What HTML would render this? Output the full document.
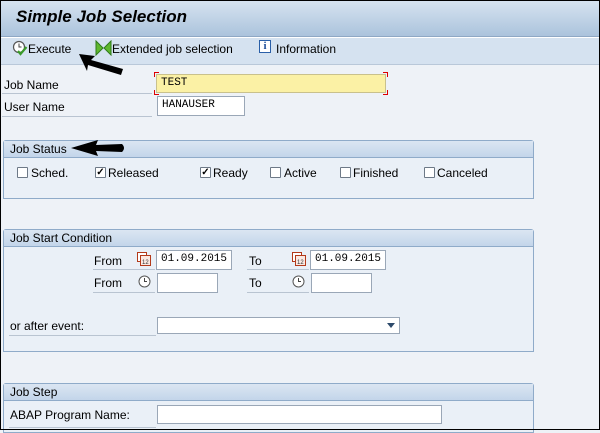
<!DOCTYPE html>
<html><head><meta charset="utf-8"><style>
*{margin:0;padding:0;box-sizing:border-box}
body{width:600px;height:430px;overflow:hidden;background:#eef2f7;font-family:"Liberation Sans",sans-serif;font-size:12px;color:#000;position:relative}
.a{position:absolute}
.frame{left:0;top:0;width:600px;height:430px;border:1px solid #000}
.title{left:1px;top:1px;width:598px;height:36px;background:linear-gradient(#d6e3f0,#abc3dc);border-bottom:1px solid #8fa8c4}
.title span{position:absolute;left:15px;top:6px;font-weight:bold;font-style:italic;font-size:17px;color:#000}
.tb{left:1px;top:37px;width:598px;height:28px;background:#d5e2f0;border-top:1px solid #fff;border-bottom:1px solid #b9c8d9}
.lab{font-size:12px;line-height:14px}
.inp{background:#fff;border:1px solid #9aa7b7;font-family:"Liberation Mono",monospace;font-size:11px;padding-left:4px;line-height:17px}
.sep{height:1px;background:#b9c4d1}
.grp{border:1px solid #8fabc9;border-radius:3px 3px 0 0;background:#eaf0f7}
.gh{position:absolute;left:0;top:0;right:0;height:17px;background:linear-gradient(#dbe6f2,#c3d5ea);border-bottom:1px solid #8fabc9;padding-left:6px;line-height:17px;font-size:12px}
.cb{width:11px;height:11px;border:1px solid #6d7987;background:#fff;border-radius:1px}
.ck{font-size:10px;line-height:9px;text-align:center;font-weight:bold}
</style></head><body>
<div class="a title"><span>Simple Job Selection</span></div>
<div class="a tb"></div>
<svg class="a" style="left:12px;top:40px" width="16" height="16" viewBox="0 0 16 16"><circle cx="7" cy="7" r="5.5" fill="#fff" stroke="#555" stroke-width="1.2"/><path d="M7 3.5V7H9.5" stroke="#444" fill="none"/><path d="M6 11l2.5 3 6-7" stroke="#3a9a2a" stroke-width="2.2" fill="none"/></svg>
<div class="a lab" style="left:28px;top:42px">Execute</div>
<svg class="a" style="left:95px;top:40px" width="17" height="16" viewBox="0 0 17 16"><path d="M1 1L8 8L1 15Z M16 1L9 8L16 15Z" fill="#5fb82e" stroke="#2e7a1a"/></svg>
<div class="a lab" style="left:112px;top:42px">Extended job selection</div>
<div class="a" style="left:259px;top:40px;width:12px;height:13px;border:1px solid #2a5fa8;background:#fff;color:#1f4f9a;font-weight:bold;font-size:11px;line-height:11px;text-align:center;font-family:'Liberation Serif',serif">i</div>
<div class="a lab" style="left:276px;top:42px">Information</div>
<svg class="a" style="left:75px;top:50px" width="55" height="30" viewBox="0 0 55 30"><path d="M4 4L20 6L16 10L48 19L46 25L13 15L12 21Z" fill="#000"/></svg>

<div class="a lab" style="left:4px;top:78px">Job Name</div>
<div class="a sep" style="left:2px;top:93px;width:150px"></div>
<div class="a lab" style="left:4px;top:100px">User Name</div>
<div class="a sep" style="left:2px;top:116px;width:150px"></div>
<div class="a inp" style="left:156px;top:74px;width:230px;height:19px;background:#fbf1a5;border-color:#c9c18c">TEST</div>
<div class="a" style="left:154px;top:72px;width:5px;height:5px;border-left:1px solid #d00;border-top:1px solid #d00"></div>
<div class="a" style="left:154px;top:90px;width:5px;height:5px;border-left:1px solid #d00;border-bottom:1px solid #d00"></div>
<div class="a" style="left:383px;top:72px;width:5px;height:5px;border-right:1px solid #d00;border-top:1px solid #d00"></div>
<div class="a" style="left:383px;top:90px;width:5px;height:5px;border-right:1px solid #d00;border-bottom:1px solid #d00"></div>
<div class="a inp" style="left:157px;top:96px;width:88px;height:20px">HANAUSER</div>

<div class="a grp" style="left:3px;top:140px;width:531px;height:59px"><div class="gh">Job Status</div></div>
<svg class="a" style="left:70px;top:138px" width="56" height="20" viewBox="0 0 56 20"><path d="M1 10L28 2L26 7L52 6Q56 10 52 14L26 13L28 18Z" fill="#000"/></svg>
<div class="a cb" style="left:17px;top:167px"></div><div class="a lab" style="left:31px;top:166px">Sched.</div>
<div class="a cb ck" style="left:95px;top:167px">✓</div><div class="a lab" style="left:108px;top:166px">Released</div>
<div class="a cb ck" style="left:200px;top:167px">✓</div><div class="a lab" style="left:213px;top:166px">Ready</div>
<div class="a cb" style="left:270px;top:167px"></div><div class="a lab" style="left:284px;top:166px">Active</div>
<div class="a cb" style="left:340px;top:167px"></div><div class="a lab" style="left:353px;top:166px">Finished</div>
<div class="a cb" style="left:424px;top:167px"></div><div class="a lab" style="left:437px;top:166px">Canceled</div>

<div class="a grp" style="left:3px;top:229px;width:531px;height:123px"><div class="gh">Job Start Condition</div></div>
<div class="a lab" style="left:94px;top:254px">From</div>
<div class="a sep" style="left:93px;top:269px;width:62px"></div>
<svg class="a" style="left:137px;top:252px" width="14" height="14" viewBox="0 0 14 14"><rect x="0.5" y="0.5" width="9" height="9" fill="#fff" stroke="#b33a1a"/><rect x="3.5" y="3.5" width="10" height="10" fill="#fbe9e2" stroke="#b33a1a"/><text x="5" y="12" font-size="6" font-family="Liberation Sans" fill="#333">12</text></svg>
<div class="a inp" style="left:156px;top:250px;width:76px;height:20px">01.09.2015</div>
<div class="a lab" style="left:249px;top:254px">To</div>
<div class="a sep" style="left:247px;top:269px;width:62px"></div>
<svg class="a" style="left:292px;top:252px" width="14" height="14" viewBox="0 0 14 14"><rect x="0.5" y="0.5" width="9" height="9" fill="#fff" stroke="#b33a1a"/><rect x="3.5" y="3.5" width="10" height="10" fill="#fbe9e2" stroke="#b33a1a"/><text x="5" y="12" font-size="6" font-family="Liberation Sans" fill="#333">12</text></svg>
<div class="a inp" style="left:310px;top:250px;width:76px;height:20px">01.09.2015</div>
<div class="a lab" style="left:94px;top:276px">From</div>
<div class="a sep" style="left:93px;top:292px;width:62px"></div>
<svg class="a" style="left:138px;top:275px" width="13" height="13" viewBox="0 0 13 13"><circle cx="6.5" cy="6.5" r="5.5" fill="#fff" stroke="#555"/><path d="M6.5 3V6.5H9" stroke="#444" fill="none"/></svg>
<div class="a inp" style="left:157px;top:273px;width:61px;height:20px"></div>
<div class="a lab" style="left:249px;top:276px">To</div>
<div class="a sep" style="left:247px;top:292px;width:62px"></div>
<svg class="a" style="left:292px;top:275px" width="13" height="13" viewBox="0 0 13 13"><circle cx="6.5" cy="6.5" r="5.5" fill="#fff" stroke="#555"/><path d="M6.5 3V6.5H9" stroke="#444" fill="none"/></svg>
<div class="a inp" style="left:311px;top:273px;width:61px;height:20px"></div>
<div class="a lab" style="left:10px;top:319px">or after event:</div>
<div class="a sep" style="left:9px;top:335px;width:147px"></div>
<div class="a inp" style="left:157px;top:317px;width:243px;height:17px"></div>
<div class="a" style="left:387px;top:323px;width:0;height:0;border-left:4px solid transparent;border-right:4px solid transparent;border-top:5px solid #2d4a6b"></div>

<div class="a grp" style="left:3px;top:383px;width:531px;height:50px"><div class="gh">Job Step</div></div>
<div class="a lab" style="left:10px;top:408px">ABAP Program Name:</div>
<div class="a sep" style="left:9px;top:427px;width:147px"></div>
<div class="a inp" style="left:157px;top:405px;width:285px;height:19px"></div>
<div class="a frame"></div>
</body></html>
